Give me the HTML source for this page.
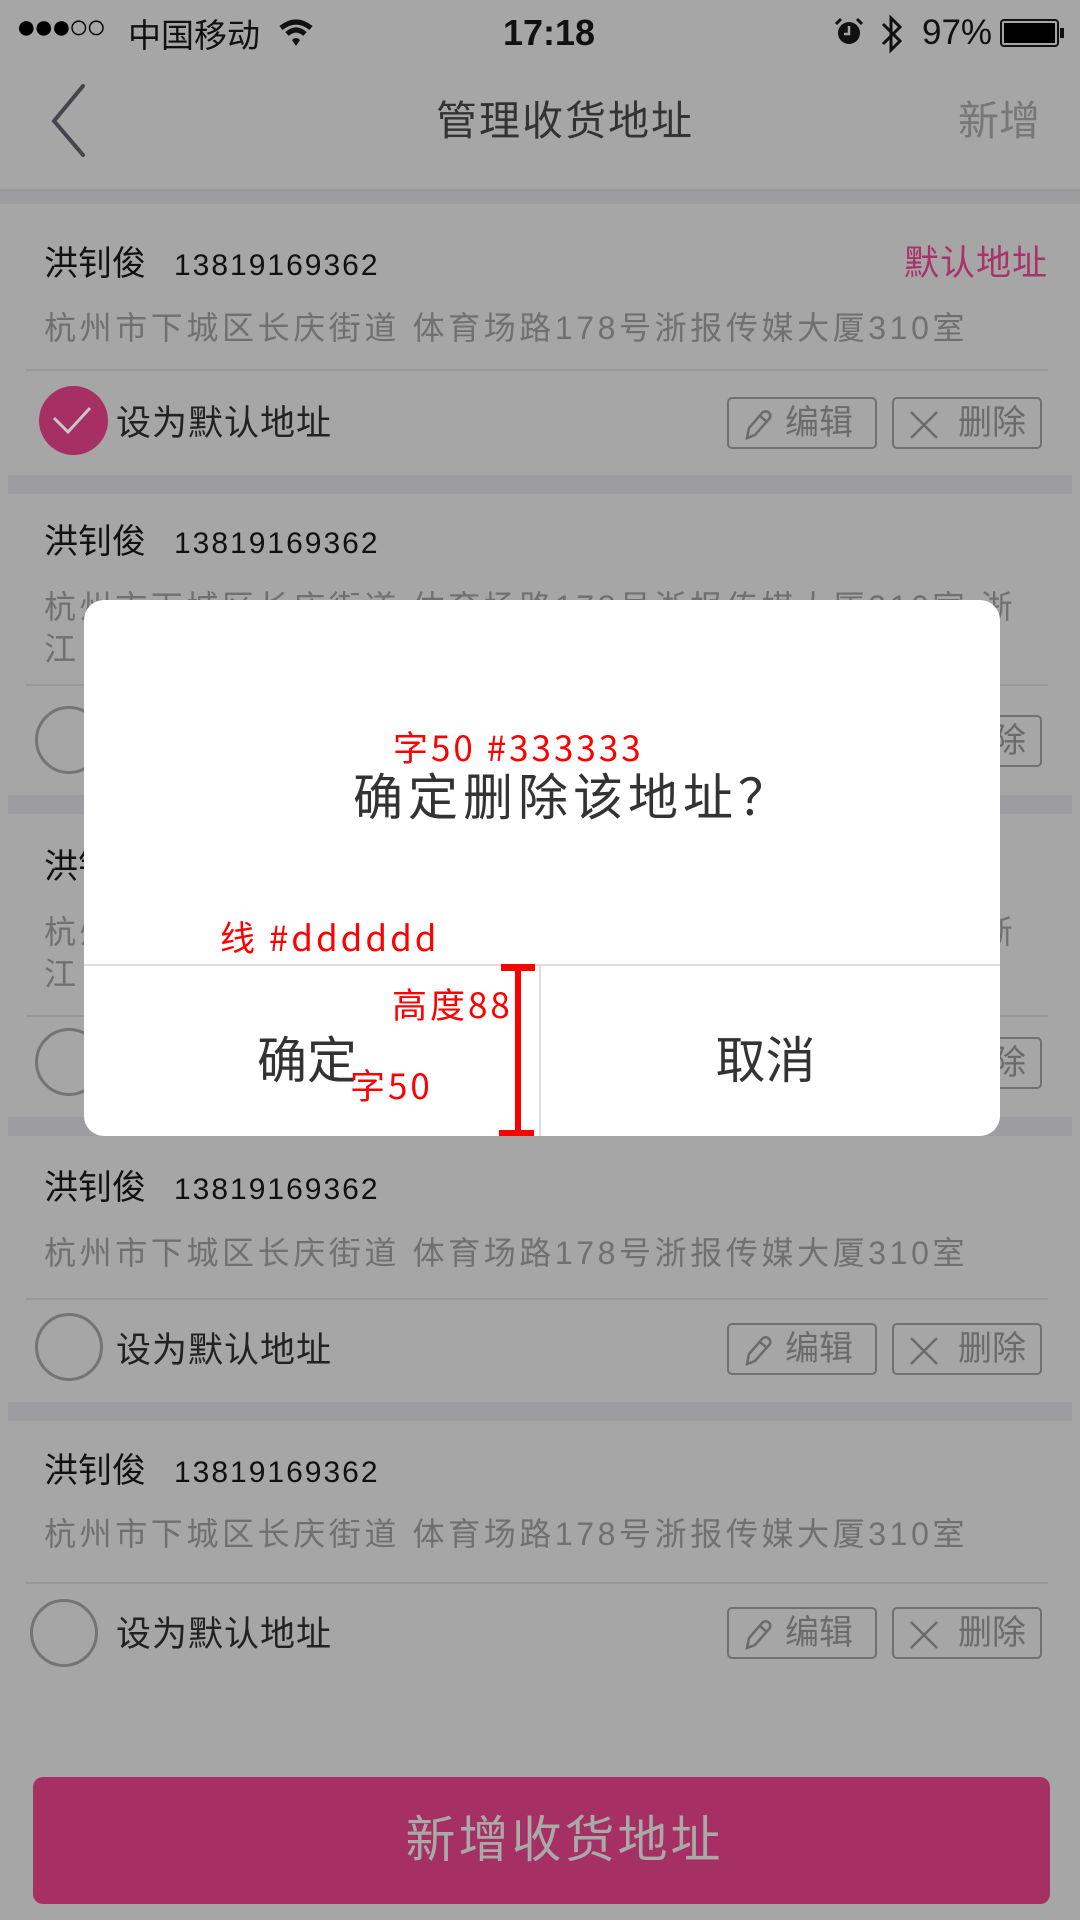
<!DOCTYPE html>
<html><head><meta charset="utf-8"><style>
*{margin:0;padding:0;box-sizing:border-box}
body{width:1080px;height:1920px;background:#a6a6a6;position:relative;overflow:hidden;font-family:"Liberation Sans","Noto Sans CJK SC",sans-serif}
.a{position:absolute;white-space:nowrap}
.band{position:absolute;left:8px;right:8px;height:19px;background:#9d9da1}
.name{position:absolute;left:44px;font-size:34px;color:#111;line-height:40px}
.name span{font-size:30px;margin-left:28px;letter-spacing:2px}
.addr{position:absolute;left:44px;font-size:32px;color:#707070;line-height:40px;letter-spacing:3.6px}
.div{position:absolute;left:26px;right:32px;height:2px;background:#989898}
.circ{position:absolute;left:35px;width:68px;height:68px;border:3px solid #747474;border-radius:50%}
.lab{position:absolute;left:116px;font-size:35px;color:#222;line-height:40px;letter-spacing:1px}
.btn{position:absolute;width:150px;height:52px;border:2px solid #707070;border-radius:5px;color:#6b6b6b;font-size:34px;line-height:48px}
.btn svg{position:absolute;left:14px;top:10px}
.btn b{font-weight:normal;position:absolute;left:56px;top:0}
.red{position:absolute;color:#f00;font-size:35px;line-height:38px;white-space:nowrap;font-family:"Noto Sans CJK SC",sans-serif;letter-spacing:3px}
</style></head><body>
<!-- status bar -->
<div class="a" style="left:16px;top:8px;font-size:34px;color:#000;letter-spacing:-3px">●●●○○</div>
<div class="a" style="left:128px;top:12px;font-size:33px;color:#111;font-family:'Noto Sans CJK SC',sans-serif;line-height:42px">中国移动</div>
<svg class="a" style="left:278px;top:18px" width="36" height="30" viewBox="0 0 36 30"><path d="M3 10 Q18 -2 33 10" stroke="#111" stroke-width="5" fill="none"/><path d="M9 16 Q18 8 27 16" stroke="#111" stroke-width="5" fill="none"/><path d="M14 22 L18 28 L22 22 Q18 18 14 22Z" fill="#111"/></svg>
<div class="a" style="left:503px;top:12px;font-size:36px;font-weight:bold;color:#111;line-height:42px">17:18</div>
<svg class="a" style="left:834px;top:17px" width="30" height="30" viewBox="0 0 30 30"><circle cx="15" cy="16" r="11" fill="#111"/><path d="M15 9 V17 H10" stroke="#a6a6a6" stroke-width="2.5" fill="none"/><path d="M2 7 L7 2 M28 7 L23 2" stroke="#111" stroke-width="3"/></svg>
<svg class="a" style="left:880px;top:14px" width="24" height="40" viewBox="0 0 24 40"><path d="M3 10 L20 27 L11 36 V4 L20 13 L3 30" stroke="#111" stroke-width="3" fill="none"/></svg>
<div class="a" style="left:922px;top:12px;font-size:35px;color:#111;line-height:42px">97%</div>
<div class="a" style="left:1000px;top:19px;width:59px;height:28px;border:2px solid #111;border-radius:4px;padding:2px"><div style="width:100%;height:100%;background:#000"></div></div>
<div class="a" style="left:1060px;top:28px;width:4px;height:10px;background:#111"></div>
<!-- nav -->
<svg class="a" style="left:40px;top:80px" width="60" height="84"><path d="M43 6 L14 41 L43 75" stroke="#45464d" stroke-width="4" fill="none" stroke-linecap="round"/></svg>
<div class="a" style="left:436px;top:96px;font-size:41px;color:#333;line-height:50px;letter-spacing:2px">管理收货地址</div>
<div class="a" style="left:958px;top:96px;font-size:41px;color:#777;line-height:50px">新增</div>
<div class="a" style="left:0;top:189px;width:1080px;height:2px;background:#979797"></div>
<div class="a" style="left:0;top:191px;width:1080px;height:13px;background:#9d9da1"></div>
<!-- card1 -->
<div class="name" style="top:244px">洪钊俊<span>13819169362</span></div>
<div class="a" style="left:904px;top:244px;font-size:35px;color:#a8326a;line-height:40px;letter-spacing:1px">默认地址</div>
<div class="addr" style="top:308px">杭州市下城区长庆街道 体育场路178号浙报传媒大厦310室</div>
<div class="div" style="top:369px"></div>
<div class="a" style="left:39px;top:386px;width:69px;height:69px;border-radius:50%;background:#a62f64"></div>
<svg class="a" style="left:39px;top:386px" width="69" height="69"><path d="M15 32 L29 46 L51 22" stroke="#c8c8c8" stroke-width="3" fill="none"/></svg>
<div class="lab" style="top:404px">设为默认地址</div>
<div class="btn" style="left:727px;top:397px"><svg width="30" height="32"><path d="M4 29 L6 19 L20 3 Q24 1 27 5 Q28 8 26 10 L12 26 Z M17 7 L24 13" stroke="#6b6b6b" stroke-width="2.5" fill="none"/></svg><b>编辑</b></div>
<div class="btn" style="left:892px;top:397px"><svg width="32" height="32"><path d="M3 3 L29 29 M29 3 L3 29" stroke="#6b6b6b" stroke-width="2.5"/></svg><b style="left:64px">删除</b></div>
<div class="band" style="top:475px"></div>
<!-- card2 -->
<div class="name" style="top:522px">洪钊俊<span>13819169362</span></div>
<div class="addr" style="top:586px;line-height:42px">杭州市下城区长庆街道 体育场路178号浙报传媒大厦310室 浙<br>江</div>
<div class="div" style="top:684px"></div>
<div class="circ" style="top:706px"></div>
<div class="btn" style="left:892px;top:715px"><b style="left:64px">删除</b></div>
<div class="band" style="top:795px"></div>
<!-- card3 -->
<div class="name" style="top:847px">洪钊俊<span>13819169362</span></div>
<div class="addr" style="top:911px;line-height:42px">杭州市下城区长庆街道 体育场路178号浙报传媒大厦310室 浙<br>江</div>
<div class="div" style="top:1015px"></div>
<div class="circ" style="top:1028px"></div>
<div class="btn" style="left:892px;top:1037px"><b style="left:64px">删除</b></div>
<div class="band" style="top:1117px"></div>
<!-- card4 -->
<div class="name" style="top:1168px">洪钊俊<span>13819169362</span></div>
<div class="addr" style="top:1233px">杭州市下城区长庆街道 体育场路178号浙报传媒大厦310室</div>
<div class="div" style="top:1298px"></div>
<div class="circ" style="top:1313px"></div>
<div class="lab" style="top:1331px">设为默认地址</div>
<div class="btn" style="left:727px;top:1323px"><svg width="30" height="32"><path d="M4 29 L6 19 L20 3 Q24 1 27 5 Q28 8 26 10 L12 26 Z M17 7 L24 13" stroke="#6b6b6b" stroke-width="2.5" fill="none"/></svg><b>编辑</b></div>
<div class="btn" style="left:892px;top:1323px"><svg width="32" height="32"><path d="M3 3 L29 29 M29 3 L3 29" stroke="#6b6b6b" stroke-width="2.5"/></svg><b style="left:64px">删除</b></div>
<div class="band" style="top:1402px"></div>
<!-- card5 -->
<div class="name" style="top:1451px">洪钊俊<span>13819169362</span></div>
<div class="addr" style="top:1514px">杭州市下城区长庆街道 体育场路178号浙报传媒大厦310室</div>
<div class="div" style="top:1582px"></div>
<div class="circ" style="top:1599px;left:30px"></div>
<div class="lab" style="top:1615px">设为默认地址</div>
<div class="btn" style="left:727px;top:1607px"><svg width="30" height="32"><path d="M4 29 L6 19 L20 3 Q24 1 27 5 Q28 8 26 10 L12 26 Z M17 7 L24 13" stroke="#6b6b6b" stroke-width="2.5" fill="none"/></svg><b>编辑</b></div>
<div class="btn" style="left:892px;top:1607px"><svg width="32" height="32"><path d="M3 3 L29 29 M29 3 L3 29" stroke="#6b6b6b" stroke-width="2.5"/></svg><b style="left:64px">删除</b></div>
<!-- bottom button -->
<div class="a" style="left:33px;top:1777px;width:1017px;height:127px;background:#a62f64;border-radius:10px;color:#a9a9a9;font-size:50px;line-height:127px;text-align:center;letter-spacing:3px;padding-left:46px">新增收货地址</div>
<!-- dialog -->
<div class="a" style="left:84px;top:600px;width:916px;height:536px;background:#fff;border-radius:20px;overflow:hidden">
  <div class="a" style="left:0;width:916px;top:162px;text-align:center;font-size:50px;color:#333;line-height:64px;padding-left:62px;letter-spacing:5px;font-family:'Noto Sans CJK SC',sans-serif">确定删除该地址？</div>
  <div class="a" style="left:0;top:364px;width:916px;height:2px;background:#ddd"></div>
  <div class="a" style="left:455px;top:366px;width:2px;height:170px;background:#ddd"></div>
  <div class="a" style="left:0;top:376px;width:446px;height:170px;text-align:center;font-size:50px;color:#333;line-height:170px">确定</div>
  <div class="a" style="left:457px;top:376px;width:449px;height:170px;text-align:center;font-size:50px;color:#333;line-height:170px">取消</div>
</div>
<!-- annotations -->
<div class="red" style="left:393px;top:728px">字50 #333333</div>
<div class="red" style="left:220px;top:918px">线 #dddddd</div>
<div class="red" style="left:392px;top:985px">高度88</div>
<div class="red" style="left:350px;top:1066px">字50</div>
<div class="a" style="left:515px;top:966px;width:6px;height:168px;background:#f00"></div>
<div class="a" style="left:501px;top:964px;width:34px;height:7px;background:#f00"></div>
<div class="a" style="left:499px;top:1130px;width:35px;height:6px;background:#f00"></div>
</body></html>
